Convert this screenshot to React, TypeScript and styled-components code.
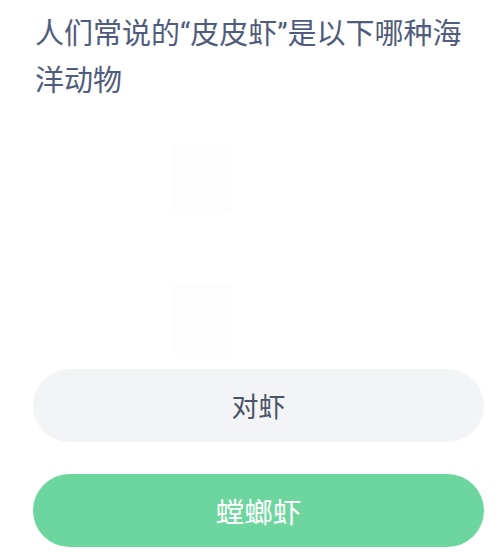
import styled, { createGlobalStyle } from "styled-components";

const GlobalStyle = createGlobalStyle`
  html, body {
    margin: 0;
    padding: 0;
    background: #fff;
  }
  body {
    font-family: Roboto, "Noto Sans CJK SC", sans-serif;
  }
`;

const Page = styled.main`
  width: 500px;
  height: 552px;
  box-sizing: border-box;
  display: flex;
  flex-direction: column;
  padding: 11px 16px 0 33px;
  overflow: hidden;
`;

const Question = styled.h1`
  margin: 0;
  padding-left: 2px;
  max-width: 440px;
  font-size: 29px;
  line-height: 47px;
  font-weight: 400;
  color: #505c7c;
`;

const Ghost = styled.div`
  flex: 1;
  display: flex;
  flex-direction: column;
  align-items: flex-start;
  padding: 39px 0 0 137px;
  gap: 70px;
`;

const GhostTile = styled.div`
  width: 62px;
  height: 70px;
  border-radius: 4px;
  background: #fdfdfd;
`;

const Options = styled.div`
  display: flex;
  flex-direction: column;
  gap: 32px;
  padding-bottom: 5px;
`;

const Option = styled.button<{ $picked?: boolean }>`
  width: 451px;
  height: 73px;
  border: none;
  border-radius: 37px;
  display: flex;
  align-items: center;
  justify-content: center;
  font-family: inherit;
  font-size: ${(p) => (p.$picked ? "28.5px" : "27px")};
  color: ${(p) => (p.$picked ? "#ffffff" : "#4c5467")};
  background: ${(p) => (p.$picked ? "#6dd69e" : "#f3f4f6")};
  cursor: pointer;
`;

const App = () => {
  return (
    <>
      <GlobalStyle />
      <Page>
        <Question>人们常说的“皮皮虾”是以下哪种海洋动物</Question>
        <Ghost>
          <GhostTile />
          <GhostTile />
        </Ghost>
        <Options>
          <Option type="button">对虾</Option>
          <Option type="button" $picked>
            螳螂虾
          </Option>
        </Options>
      </Page>
    </>
  );
};

export default App;
